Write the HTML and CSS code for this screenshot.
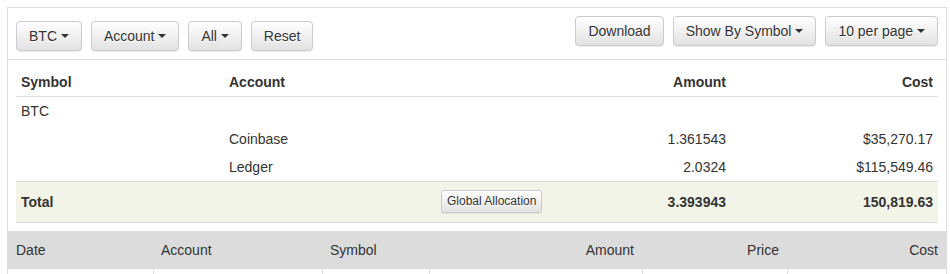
FILE: index.html
```html
<!DOCTYPE html>
<html lang="en">
<head>
  <meta charset="UTF-8" />
  <meta name="viewport" content="width=device-width, initial-scale=1.0"/>
  <title>Holdings</title>
  <link rel="stylesheet" href="styles.css">
</head>
<body>
  <div class="panel">
    <div class="panel-heading">
      <div class="btn-row filters">
        <button class="btn">BTC <span class="caret"></span></button>
        <button class="btn">Account <span class="caret"></span></button>
        <button class="btn">All <span class="caret"></span></button>
        <button class="btn">Reset</button>
      </div>
      <div class="btn-row actions">
        <button class="btn">Download</button>
        <button class="btn">Show By Symbol <span class="caret"></span></button>
        <button class="btn">10 per page <span class="caret"></span></button>
      </div>
    </div>

    <!-- Holdings summary -->
    <table class="summary">
      <colgroup>
        <col style="width: 208px">
        <col style="width: 212px">
        <col style="width: 120px">
        <col style="width: 175px">
        <col style="width: 207px">
      </colgroup>
      <thead>
        <tr>
          <th>Symbol</th>
          <th colspan="2">Account</th>
          <th class="num">Amount</th>
          <th class="num">Cost</th>
        </tr>
      </thead>
      <tbody>
        <tr>
          <td>BTC</td>
          <td colspan="2"></td>
          <td></td>
          <td></td>
        </tr>
        <tr>
          <td></td>
          <td colspan="2">Coinbase</td>
          <td class="num">1.361543</td>
          <td class="num">$35,270.17</td>
        </tr>
        <tr>
          <td></td>
          <td colspan="2">Ledger</td>
          <td class="num">2.0324</td>
          <td class="num">$115,549.46</td>
        </tr>
        <tr class="total">
          <td>Total</td>
          <td></td>
          <td><button class="btn btn-xs">Global Allocation</button></td>
          <td class="num">3.393943</td>
          <td class="num">150,819.63</td>
        </tr>
      </tbody>
    </table>

    <!-- Transactions -->
    <table class="transactions">
      <colgroup>
        <col style="width: 145px">
        <col style="width: 169px">
        <col style="width: 107px">
        <col style="width: 213px">
        <col style="width: 145px">
        <col style="width: 159px">
      </colgroup>
      <thead>
        <tr>
          <th>Date</th>
          <th>Account</th>
          <th>Symbol</th>
          <th class="num">Amount</th>
          <th class="num">Price</th>
          <th class="num">Cost</th>
        </tr>
      </thead>
      <tbody>
        <tr>
          <td></td><td></td><td></td><td></td><td></td><td></td>
        </tr>
      </tbody>
    </table>
  </div>
</body>
</html>
```

FILE: styles.css
```css
body {
  margin: 0;
  padding: 7px;
  font-family: "Liberation Sans", Arial, sans-serif;
  font-size: 14px;
  line-height: 20px;
  color: #333;
  background: #fff;
}

.panel {
  width: 940px;
  box-sizing: border-box;
  border: 1px solid #ddd;
  border-bottom: none;
}

.panel-heading {
  display: flex;
  justify-content: space-between;
  align-items: flex-start;
  padding: 8px;
  border-bottom: 1px solid #ddd;
}
.btn-row {
  display: flex;
  gap: 9px;
}
.filters { margin-top: 5px; }

.btn {
  font-family: inherit;
  font-size: 14px;
  line-height: 20px;
  color: #333;
  padding: 4px 12px;
  border: 1px solid #ccc;
  border-radius: 4px;
  background-color: #f2f2f2;
  background-image: linear-gradient(to bottom, #fff 0, #e2e2e2 100%);
  box-shadow: inset 0 1px 0 rgba(255,255,255,0.15), 0 1px 1px rgba(0,0,0,0.075);
  text-shadow: 0 1px 0 #fff;
  cursor: pointer;
  white-space: nowrap;
}
.btn-xs {
  font-size: 12px;
  line-height: 19px;
  padding: 1px 5px;
  border-radius: 3px;
}
.caret {
  display: inline-block;
  width: 0;
  height: 0;
  margin-left: 0;
  vertical-align: middle;
  border-top: 4px solid #333;
  border-left: 4px solid transparent;
  border-right: 4px solid transparent;
  position: relative;
  top: -1px;
}

table {
  border-collapse: collapse;
  table-layout: fixed;
}
th { text-align: left; }
.num { text-align: right; }

/* Summary table */
.summary {
  width: 922px;
  margin: 8px 8px 8px;
}
.summary th {
  font-weight: bold;
  padding: 4px 5px;
  border-bottom: 1px solid #ddd;
}
.summary td {
  padding: 4px 5px;
}
.summary .total td {
  background: #f3f4e8;
  font-weight: bold;
  padding: 8px 5px 9px;
  border-top: 1px solid #ddd;
  border-bottom: 1px solid #ddd;
  vertical-align: middle;
}
.summary .total .btn { font-weight: normal; }

/* Transactions table */
.transactions {
  width: 938px;
}
.transactions th {
  font-weight: normal;
  background: #dcdcdc;
  padding: 9px 8px;
}
.transactions td {
  height: 36px;
  padding: 0 8px;
  border-left: 1px solid #ddd;
}
.transactions td:first-child { border-left: none; }
```
